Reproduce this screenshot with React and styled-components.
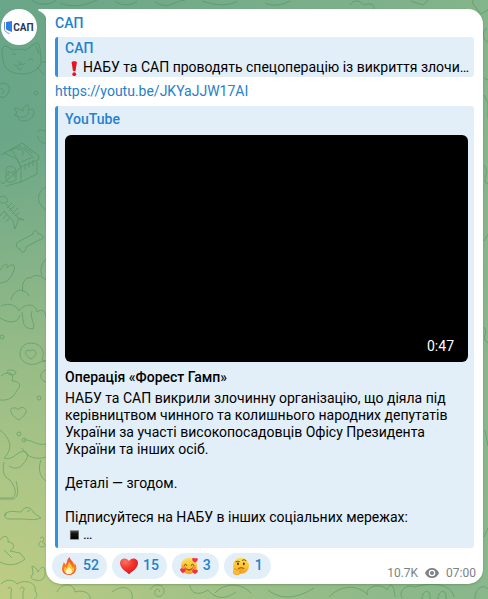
import React from "react";
import styled, { createGlobalStyle } from "styled-components";

const previewText = `НАБУ та САП викрили злочинну організацію, що діяла під керівництвом чинного та колишнього народних депутатів України за участі високопосадовців Офісу Президента України та інших осіб.

Деталі — згодом.

Підписуйтеся на НАБУ в інших соціальних мережах:`;

const reactions = [
  { name: "Вогонь", icon: <FireIcon />, count: 52 },
  { name: "Серце", icon: <HeartIcon />, count: 15 },
  { name: "Обійми", icon: <LoveFaceIcon />, count: 3 },
  { name: "Роздуми", icon: <ThinkingIcon />, count: 1 },
];

export default function App() {
  return (
    <Page>
      <GlobalStyle />
      <Wallpaper />
      <Message>
        <Avatar href="#channel" aria-label="САП">
          <ShieldIcon />
          САП
        </Avatar>
        <Bubble>
          <Tail viewBox="0 0 9 14" aria-hidden="true">
            <path d="M1 0H9V14C9 8 6 4 1 2C0 1.500 0 0 1 0Z" fill="#fff" />
          </Tail>
          <Sender href="#channel">САП</Sender>
          <Quote>
            <QuoteName>САП</QuoteName>
            <QuoteText>
              <ExclamationIcon />
              НАБУ та САП проводять спецоперацію із викриття злочи…
            </QuoteText>
          </Quote>
          <Link href="https://youtu.be/JKYaJJW17AI">https://youtu.be/JKYaJJW17AI</Link>
          <Preview>
            <SiteName>YouTube</SiteName>
            <Video aria-label="Відтворити відео">
              <Duration>0:47</Duration>
            </Video>
            <Title>Операція «Форест Гамп»</Title>
            <Text>{previewText}</Text>
            <Text>
              <SquareIcon />
              …
            </Text>
          </Preview>
          <Footer>
            <Reactions>
              {reactions.map(r => (
                <Reaction key={r.name} aria-label={`${r.name} ${r.count}`}>
                  {r.icon}
                  {r.count}
                </Reaction>
              ))}
            </Reactions>
            <Meta>
              10.7K
              <EyeIcon />
              07:00
            </Meta>
          </Footer>
        </Bubble>
      </Message>
    </Page>
  );
}

function Wallpaper() {
  return (
    <Doodles viewBox="0 0 488 599" preserveAspectRatio="xMinYMin slice" aria-hidden="true">
      <path d="M3 59C1 51 2 47 5 46C8 46 10 49 13 50C17 49 21 49 25 50C30 48 34 43 38 43C41 47 40 54 41 59C42 68 33 74 22 74C10 74 3 68 3 59Z" />
      <path d="M12 55q2-3 4 0M28 60q3-3 5 0M14 64q3 4 6 0q3 2 5-1M18 62l3 1l-1 2M17 67q3 5 5 0M41 62h6M37 67l7 8M36 46l3 8" />
      <path d="M0 84c7-3 12 3 8 9c-3 6-8 5-8 3M0 89c4-1 5 3 2 5" />
      <circle cx="36" cy="93" r="2" />
      <path d="M14 108c4 0 6 1 9 3c0-4 2-6 5-6c1 3 1 4 0 6c4-3 6-2 6 1c-1 6-5 9-10 9c-4 0-6-2-6-5l-4-1l3-2zM20 117c5 1 7-1 9-5M38 132c1-3 3-3 5-1c1-2 3-1 3 1M38 136c0 5 4 7 8 8" />
      <path d="M1 155L22 143L39 156L38 160L21 167L17 159L12 150M4 153L17 159L21 167L3 184L1 181M21 167V182L37 174V162M21 182L6 186M25 164v6M29 162v6M33 160v6M9 151l11-5l13 11l-12 5M24 147l8 6M17 149c6-1 8 4 5 7" />
      <path d="M6 180V171C6 164 16 165 16 172V180C12 183 8 183 6 180ZM8 176v-5l3 2l3-2v6" />
      <path d="M0 197c5-2 9 1 7 5c-2 2-5 1-7 0M6 204L19 219L24 220L19 218L15 229L13 221L4 211M12 203l-5 5M15 205l-6 6M18 208l-6 6M20 212l-5 4M4 211l-4 5M7 214l-4 5M10 217l-4 5" />
      <path d="M46 187c-10 6-10 16 0 23" />
      <path d="M20 241L33 234C33 229 38 230 38 234C45 234 44 240 39 240L26 247C26 253 21 254 20 249C15 248 15 242 20 241Z" />
      <path d="M0 270c5-7 8-8 7-2c5-5 9-4 7 2c-2 7-7 13-14 13M46 259c-5 5-6 11-4 17M23 292c-2-8 2-16 8-14c4-5 10-2 15 2M11 300c2-10 12-14 18-4" />
      <path d="M1 306c9-4 16 0 18 5c5-8 17-8 18 1c5-4 9 0 9 5M0 318c10 6 18 5 20-3M22 312c2 12 0 16 11 17c3-6-4-11-1-18" />
      <circle cx="2" cy="337" r="2" />
      <path d="M42 360c4-10-2-17-11-17c-7 0-11 5-11 11c0 8 11 14 20 8l6-1zM31 359c-8-4-6-11-1-8c6-4 9 4 1 8Z" />
      <path d="M1 376c7-6 14-3 11 5c8 0 10 5 5 9c-3 7-8 11-17 10M7 371c2-2 9-1 9 2c-1 3-9 2-9-1M46 370c-7 2-7 10 0 12" />
      <path d="M19 420C9 415 9 407 14 408C17 407 18 410 18 410C21 405 27 408 26 412C25 416 21 418 19 420Z" />
      <circle cx="39" cy="398" r="2" />
      <circle cx="19" cy="434" r="2" />
      <circle cx="24" cy="440" r="2" />
      <path d="M0 430c10 8 14 18 4 28c9 4 15-10 22-6c3 3 1 8-3 12c-3 5-10 5-14 2M4 462c-2 10 0 15 6 18c5 7 8 14 2 18H0M24 440c7-1 12 6 22 4M22 448c5 10 15 12 24 9M41 460c-3 8-2 16 5 21M16 481c2 7 3 15-2 18H0" />
      <path d="M5 516c2-7 10-4 16-4c4-7 10-5 13 1l7 5c-4 2-11 2-17 1H9c-5 0-6-5-2-7M27 512l3-2" />
      <path d="M0 540c4-6 9-4 8 2c7 0 7 6 2 9l10 2l5 6c-8 7-18 7-25 3M4 550l8 8M40 538c4-3 5 2 2 4c4 1 4 5 0 5c-4 0-4-4-1-6M32 566c3 1 5 3 6 6c3-6 7-6 7-1c1 7-3 11-10 9c-4-1-5-3-2-6z" />
      <path d="M1 584c5-5 12-5 16 0c7-5 20-2 18 7c3 3 2 6-1 8M8 589c1-4 5-1 3 3v7M20 589c2-4 6-1 3 3v7" />
      <path d="M57 592c5-10 17-9 18 0c9-3 16 2 15 7M112 592c12-9 22-3 20 7M150 590c4-8 15-6 14 2c-2 7-11 5-9-1c2-4 6-1 4 1M190 585c1 10 10 10 18 5c9 11 20 8 28 2M215 593c10-11 27-10 36 0M268 590c16 13 35 5 46-2M329 597c15-15 32-10 39-2M367 595c-2-10 16-12 20-5c4-9 7-5 8 7M402 598c-4-9 6-14 13-11c15-5 36-4 39 10M422 599c0-9 8-10 8-3v3M438 599c0-9 8-10 8-3v3M475 599c0-12 9-15 13-10" />
      <path d="M32 0c8 7 20 4 24 0M60 3c12 5 24 3 37-3M115 1c6 5 16 5 22 0M155 2c13 8 17 0 30-2M202 1c15 5 28 5 35 0M265 3c8 4 17 2 25-2M350 5c5-8 12-2 14 0c7-3 13 0 8 7M411 1l12 4l5-5M473 0v4l8 10l7-4M487 28c-6 4-4 12 1 14M484 78l4 2M484 95l4 8v16M484 165c7 7-4 16 4 19M484 241l4-7M484 327c5 6-4 11 4 16M485 430l3 16M484 537l4-9" />
    </Doodles>
  );
}

function ShieldIcon() {
  return (
    <svg width="8" height="13" viewBox="0 0 8 13" aria-hidden="true">
      <path d="M0.500 1V8.500C1 10.500 3 12 5.500 12.500" stroke="#6f8fb8" fill="none" />
      <path d="M2 1L8 0V11L4 9.500C2 9 2 8 2 7Z" fill="#2e7fe0" />
    </svg>
  );
}

function ExclamationIcon() {
  return (
    <Emoji viewBox="0 0 18 18" role="img" aria-label="!">
      <path d="M6.500 2.600C6.500 0.900 12 0.900 12 2.600L10.700 11.200C10.500 12.300 8 12.300 7.800 11.200Z" fill="#e8131c" />
      <circle cx="9.250" cy="15" r="2" fill="#e8131c" />
    </Emoji>
  );
}

function SquareIcon() {
  return (
    <Emoji viewBox="0 0 18 18" aria-hidden="true">
      <defs>
        <linearGradient id="square" x2="0" y2="1">
          <stop stopColor="#555" />
          <stop offset="0.300" stopColor="#151515" />
          <stop offset="1" stopColor="#000" />
        </linearGradient>
      </defs>
      <rect x="5" y="5" width="9" height="9" fill="url(#square)" stroke="#777" strokeWidth="0.600" />
    </Emoji>
  );
}

function FireIcon() {
  return (
    <svg width="18" height="18" viewBox="0 0 18 18" aria-hidden="true">
      <defs>
        <linearGradient id="fire" x2="0" y2="1">
          <stop stopColor="#f04a2c" />
          <stop offset="0.600" stopColor="#ff7a26" />
          <stop offset="1" stopColor="#f5482c" />
        </linearGradient>
      </defs>
      <path d="M9.500 0C10 3 14 4.500 14 8.500C14.600 7.800 14.600 6.800 14.300 6C16.200 8 17 10.500 16 13C15 16.300 12.500 18 9 18C5 18 2 15.600 2 11.800C2 9 3.500 7.500 3.700 5.200C4.800 6 5.200 7 5.200 8.200C7.500 6 6.500 2.500 9.500 0Z" fill="url(#fire)" />
      <path d="M9.500 4.500C9.300 7 12.800 8.500 12.700 11.500C13.300 11.200 13.600 10.600 13.700 10C15.300 13.500 13 17 9 17C5.600 17 3.600 14.800 4 12C4.200 11 4.800 10.300 5 9.500C5.700 10 6 10.600 6 11.300C8.500 9.500 7.500 7 9.500 4.500Z" fill="#ffc52e" />
      <path d="M9 8.500C9 11 12.200 12 12 14.500C11.800 16.300 10.500 17.300 8.900 17.300C7 17.300 5.600 16 5.900 14.200C6.200 12.700 8.700 12 9 8.500Z" fill="#fff6c4" />
    </svg>
  );
}

function HeartIcon() {
  return (
    <svg width="18" height="18" viewBox="0 0 18 18" aria-hidden="true">
      <defs>
        <radialGradient id="heart" cx="0.300" cy="0.200" r="0.900">
          <stop stopColor="#ff7565" />
          <stop offset="0.450" stopColor="#f5362e" />
          <stop offset="1" stopColor="#d4141f" />
        </radialGradient>
      </defs>
      <path d="M9 17.300C7 15 0 11.600 0 6C0 0.500 7 0 9 4C11 0 18 0.500 18 6C18 11.600 11 15 9 17.300Z" fill="url(#heart)" />
    </svg>
  );
}

function FaceGradient({ id }) {
  return (
    <defs>
      <linearGradient id={id} x2="0" y2="1">
        <stop stopColor="#ffe05a" />
        <stop offset="0.600" stopColor="#fdbf2d" />
        <stop offset="1" stopColor="#f39a22" />
      </linearGradient>
    </defs>
  );
}

function LoveFaceIcon() {
  return (
    <svg width="18" height="18" viewBox="0 0 18 18" aria-hidden="true">
      <FaceGradient id="loveFace" />
      <circle cx="9" cy="9" r="8.200" fill="url(#loveFace)" />
      <circle cx="4" cy="10.500" r="2" fill="#f5793a" opacity="0.600" />
      <circle cx="14" cy="10.500" r="2" fill="#f5793a" opacity="0.600" />
      <path d="M4 8.300Q5.500 6 7 8.300M11 8.300Q12.500 6 14 8.300M5.800 11.500Q9 15 12.200 11.500" fill="none" stroke="#6b3511" strokeWidth="1" strokeLinecap="round" />
      <path id="smallHeart" d="M15 5.800C13.500 4.500 11.800 3.500 12.200 1.800C12.700 0.400 14.600 0.500 15 1.800C15.800 0.500 17.800 0.900 17.800 2.500C17.800 4 16 4.800 15 5.800Z" fill="#f0304a" />
      <use href="#smallHeart" x="-12" y="10.500" />
      <use href="#smallHeart" y="11.500" />
    </svg>
  );
}

function ThinkingIcon() {
  return (
    <svg width="18" height="18" viewBox="0 0 18 18" aria-hidden="true">
      <FaceGradient id="thinking" />
      <circle cx="9" cy="8.800" r="8" fill="url(#thinking)" />
      <ellipse cx="6" cy="6.800" rx="1" ry="1.400" fill="#593310" />
      <ellipse cx="11.800" cy="6.800" rx="1" ry="1.400" fill="#593310" />
      <path d="M3.800 4.700Q5.500 3.700 7.300 4.500M10.300 3.200Q12.200 1.800 14 3.500M6.500 11.300Q9 10 11.800 11.200" fill="none" stroke="#754514" strokeWidth="0.900" strokeLinecap="round" />
      <path d="M2.200 12C2.700 10.900 3.700 11.300 3.700 12.500L4.500 13.500L9 11.900C10.200 11.700 10.500 13 9.400 13.400L7.300 14.200C9 15.500 7.500 18 5 18C2.500 18 1.300 16.500 1.500 14.500Z" fill="#ffbe30" stroke="#df8519" strokeWidth="0.600" />
    </svg>
  );
}

function EyeIcon() {
  return (
    <svg width="14" height="10" viewBox="0 0 14 10" aria-hidden="true">
      <path fillRule="evenodd" fill="#7d8185" d="M7 0C3.800 0 1.100 2 0 5C1.100 8 3.800 10 7 10S12.900 8 14 5C12.900 2 10.200 0 7 0ZM7 8.300A3.300 3.300 0 1 1 7 1.700A3.300 3.300 0 0 1 7 8.300ZM7 3A2 2 0 1 0 7 7A2 2 0 0 0 7 3Z" />
    </svg>
  );
}

const GlobalStyle = createGlobalStyle`
  * {
    box-sizing: border-box;
  }
  body {
    margin: 0;
    font-family: Roboto, "Noto Sans", sans-serif;
    font-size: 14px;
    line-height: 17px;
    color: #000;
  }
  a {
    text-decoration: none;
  }
  button {
    border: none;
    padding: 0;
    font: inherit;
    cursor: pointer;
  }
`

const Page = styled.main`
  position: relative;
  min-height: 100vh;
  padding: 9px 5px 15px 1px;
  overflow: hidden;
  background:
    radial-gradient(circle at 0% 100%, #bfcd82 0%, rgba(184, 204, 133, 0.85) 15%, rgba(160, 192, 135, 0) 60%),
    linear-gradient(100deg, #69a588 0%, #8ab88b 100%);
`

const Doodles = styled.svg`
  position: absolute;
  inset: 0;
  width: 100%;
  height: 100%;
  fill: none;
  stroke: #3f8a55;
  stroke-width: 1;
  stroke-linejoin: round;
  opacity: 0.45;
`

const Message = styled.article`
  position: relative;
  display: flex;
  align-items: flex-start;
  gap: 9px;
`

const Avatar = styled.a`
  display: flex;
  flex-shrink: 0;
  align-items: center;
  justify-content: center;
  gap: 1px;
  width: 36px;
  height: 36px;
  border-radius: 50%;
  background: #fff;
  color: #27395b;
  font-size: 10px;
  font-weight: 700;

  svg {
    flex-shrink: 0;
  }
`

const Bubble = styled.div`
  position: relative;
  flex: 1;
  min-width: 0;
  padding: 6px 9px 5px;
  border-radius: 0 15px 15px 15px;
  background: #fff;
  box-shadow: 0 1px 2px rgba(50, 90, 40, 0.3);
`

const Tail = styled.svg`
  position: absolute;
  top: 0;
  left: -8px;
  width: 9px;
  height: 14px;
`

const Sender = styled.a`
  display: block;
  margin-bottom: 5px;
  color: #2481cc;
  font-weight: 500;
`

const Quote = styled.blockquote`
  margin: 0 0 6px;
  padding: 3px 4px 0 7px;
  border-left: 3px solid #3390dc;
  border-radius: 3px;
  background: #e2eff9;
`

const QuoteName = styled.div`
  color: #2481cc;
  font-weight: 500;
`

const QuoteText = styled.div`
  overflow: hidden;
  line-height: 20px;
  white-space: nowrap;
  text-overflow: ellipsis;
`

const Link = styled.a`
  display: block;
  margin-bottom: 6px;
  color: #2481cc;
`

const Preview = styled.section`
  padding: 5px 6px 5px 7px;
  border-left: 3px solid #3390dc;
  border-radius: 3px;
  background: #e2eff9;
`

const SiteName = styled.div`
  margin-bottom: 7px;
  color: #2481cc;
  font-weight: 500;
`

const Video = styled.button`
  display: flex;
  align-items: flex-end;
  justify-content: flex-end;
  width: 100%;
  aspect-ratio: 16 / 9;
  border-radius: 6px;
  background: #000;
`

const Duration = styled.span`
  padding: 0 14px 7px;
  color: #fff;
`

const Title = styled.h1`
  margin: 7px 0 4px;
  font-size: 14px;
  font-weight: 500;
`

const Text = styled.p`
  margin: 0;
  white-space: pre-line;
`

const Emoji = styled.svg`
  width: 18px;
  height: 17px;
  vertical-align: bottom;
`

const Footer = styled.footer`
  display: flex;
  align-items: flex-end;
  justify-content: space-between;
  padding-top: 5px;
`

const Reactions = styled.div`
  display: flex;
  gap: 5px;
  margin-left: -3px;
`

const Reaction = styled.button`
  display: flex;
  align-items: center;
  gap: 5px;
  height: 26px;
  padding: 0 8px;
  border-radius: 13px;
  background: #e2eff9;
  color: #2481cc;
  font-weight: 500;
`

const Meta = styled.div`
  display: flex;
  align-items: center;
  gap: 7px;
  margin: 0 -2px -3px 0;
  color: #7d8185;
  font-size: 12px;
`
